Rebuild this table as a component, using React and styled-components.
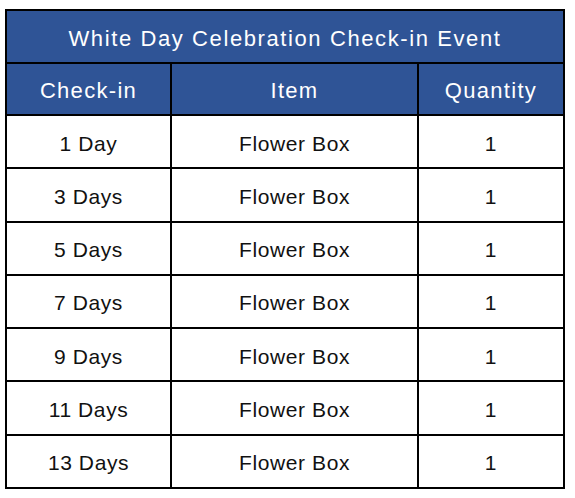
import React from 'react';
import styled, { createGlobalStyle } from 'styled-components';

const ROWS = [
  { days: '1 Day', item: 'Flower Box', qty: 1 },
  { days: '3 Days', item: 'Flower Box', qty: 1 },
  { days: '5 Days', item: 'Flower Box', qty: 1 },
  { days: '7 Days', item: 'Flower Box', qty: 1 },
  { days: '9 Days', item: 'Flower Box', qty: 1 },
  { days: '11 Days', item: 'Flower Box', qty: 1 },
  { days: '13 Days', item: 'Flower Box', qty: 1 },
];

const GlobalStyle = createGlobalStyle`
  body {
    margin: 0;
    background: #fff;
    font-family: 'Liberation Sans', Arial, sans-serif;
  }
`;

const App = () => {
  return (
    <Page>
      <GlobalStyle />
      <Table>
        <Title>White Day Celebration Check-in Event</Title>
        <HeadCell>Check-in</HeadCell>
        <HeadCell>Item</HeadCell>
        <HeadCell>Quantity</HeadCell>
        {ROWS.map((row) => (
          <React.Fragment key={row.days}>
            <Cell>{row.days}</Cell>
            <Cell>{row.item}</Cell>
            <Cell>{row.qty}</Cell>
          </React.Fragment>
        ))}
      </Table>
    </Page>
  );
};

export default App;

const Page = styled.div`
  padding: 9px 0 0 5px;
`;

const Table = styled.div`
  width: 560px;
  height: 480px;
  box-sizing: border-box;
  display: grid;
  grid-template-columns: 163px 245px 144px;
  grid-template-rows: 51px 50px repeat(7, 1fr);
  gap: 2px;
  padding: 2px;
  background: #000;
`;

const BaseCell = styled.div`
  display: flex;
  align-items: center;
  justify-content: center;
  box-sizing: border-box;
  padding-top: 4px;
  font-size: 21px;
`;

const Title = styled(BaseCell)`
  grid-column: 1 / -1;
  background: #2f5496;
  color: #fff;
  font-size: 22px;
  letter-spacing: 1.6px;
`;

const HeadCell = styled(BaseCell)`
  background: #2f5496;
  color: #fff;
  font-size: 22px;
  letter-spacing: 1.3px;
`;

const Cell = styled(BaseCell)`
  background: #fff;
  color: #111;
  letter-spacing: 0.6px;
`;
